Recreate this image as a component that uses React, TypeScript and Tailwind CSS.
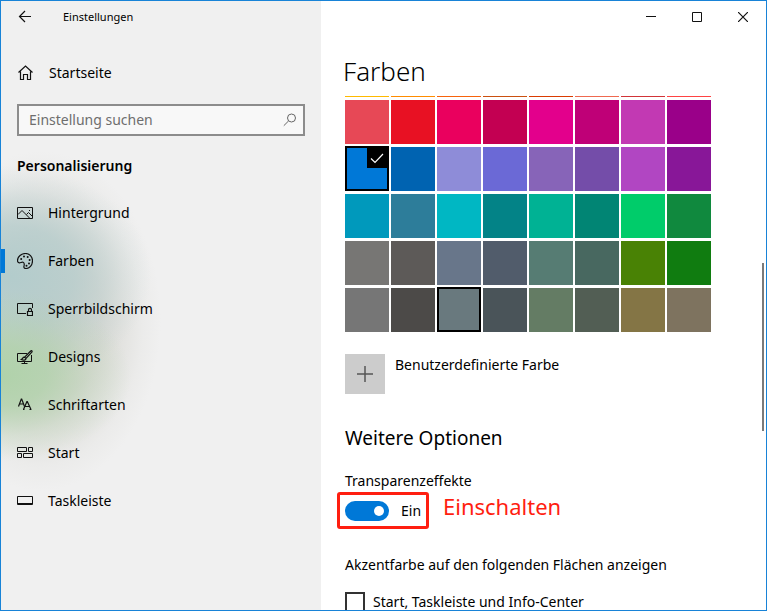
import type { ReactNode } from 'react';

const swatchRows: string[][] = [
  ['bg-[#ffb900]', 'bg-[#ff8c00]', 'bg-[#f7630c]', 'bg-[#ca5010]', 'bg-[#da3b01]', 'bg-[#ef6950]', 'bg-[#d13438]', 'bg-[#ff4343]'],
  ['bg-[#e74856]', 'bg-[#e81123]', 'bg-[#ea005e]', 'bg-[#c30052]', 'bg-[#e3008c]', 'bg-[#bf0077]', 'bg-[#c239b3]', 'bg-[#9a0089]'],
  ['bg-[#0078d7]', 'bg-[#0063b1]', 'bg-[#8e8cd8]', 'bg-[#6b69d6]', 'bg-[#8764b8]', 'bg-[#744da9]', 'bg-[#b146c2]', 'bg-[#881798]'],
  ['bg-[#0099bc]', 'bg-[#2d7d9a]', 'bg-[#00b7c3]', 'bg-[#038387]', 'bg-[#00b294]', 'bg-[#018574]', 'bg-[#00cc6a]', 'bg-[#10893e]'],
  ['bg-[#777674]', 'bg-[#5d5a58]', 'bg-[#68768a]', 'bg-[#515c6b]', 'bg-[#567c73]', 'bg-[#486860]', 'bg-[#498205]', 'bg-[#107c10]'],
  ['bg-[#767676]', 'bg-[#4c4a48]', 'bg-[#69797e]', 'bg-[#4a5459]', 'bg-[#647c64]', 'bg-[#525e54]', 'bg-[#847545]', 'bg-[#7e735f]'],
];

function Icon({ children }: { children: ReactNode }) {
  return (
    <svg viewBox="0 0 16 16" className="size-4 shrink-0" fill="none" stroke="#111" strokeWidth="1" aria-hidden="true">
      {children}
    </svg>
  );
}

const navItems: { label: string; icon: ReactNode }[] = [
  {
    label: 'Hintergrund',
    icon: (
      <Icon>
        <path d="M.5 2.500h15v11H.5z" />
        <path d="M1 9.500 5 5.500l7.500 7.500M9.500 9.500l2-2 4 4" />
        <path d="M12 5.500h1" />
      </Icon>
    ),
  },
  {
    label: 'Farben',
    icon: (
      <Icon>
        <path d="M8.500.5c4 0 7 3.200 7 7.200 0 4.500-3.200 7.800-6.500 7.800-1.800 0-2.400-1-2-2.500.4-1.700.6-3.300-.9-3.800C4.800 8.800 3.500 10 2.200 9.800.9 9.600.5 8.500.5 7.500c0-4 4-7 8-7z" strokeWidth="1.200" />
        <g fill="#111" stroke="none">
          <circle cx="4.200" cy="6" r="1" />
          <circle cx="7" cy="3.500" r="1" />
          <circle cx="10.700" cy="4" r="1" />
          <circle cx="12.600" cy="7" r="1" />
          <circle cx="12" cy="10.500" r="1" />
          <circle cx="9.500" cy="12.800" r="1" />
        </g>
      </Icon>
    ),
  },
  {
    label: 'Sperrbildschirm',
    icon: (
      <Icon>
        <path d="M9 12.500H.5v-10h15V7" />
        <path d="M10.500 10.500h5v4h-5zM11.500 10.500V8.800c0-1.800 3-1.800 3 0v1.700" strokeWidth="1.200" />
      </Icon>
    ),
  },
  {
    label: 'Designs',
    icon: (
      <Icon>
        <path d="M10 4.500H.5v8h14V6M7.500 12.500v2M4.500 14.500h6" />
        <path d="M14.800 1.800c.6.500.3 1-.2 1.600L9 9.500 7.600 8.200l5.600-5.700c.6-.6 1.100-1.100 1.600-.7zM7.600 8.200C5.500 8 5.800 10 4.300 10.500 6.500 11.600 9 11.200 9 9.500" strokeWidth="1.200" />
      </Icon>
    ),
  },
  {
    label: 'Schriftarten',
    icon: (
      <Icon>
        <path d="M1.500 9.500 4.300 2h.4l2.800 7.500M2.500 7h4" strokeWidth="1.200" />
        <path d="M6.500 12.500 9.900 4.500h.4l3.700 8M8 9.500h4.500M6 12.500h1.500M12.500 12.500h2" strokeWidth="1.200" />
      </Icon>
    ),
  },
  {
    label: 'Start',
    icon: (
      <Icon>
        <path d="M.5 2.500h9v4h-9zM11.500 2.500h4v4h-4zM.5 8.500h4v4h-4zM6.500 8.500h9v4h-9z" />
      </Icon>
    ),
  },
  {
    label: 'Taskleiste',
    icon: (
      <Icon>
        <path d="M.5 3.500h15v8H.5zM.5 10.500h15" />
      </Icon>
    ),
  },
];

function Sidebar() {
  return (
    <aside className="flex w-80 shrink-0 flex-col bg-[#f0f0f0] bg-[radial-gradient(ellipse_130px_85px_at_0_375px,#b0d2aa_0%,#b0d2aacc_35%,#b0d2aa44_70%,transparent),radial-gradient(ellipse_140px_110px_at_10px_275px,#b3cccc_0%,#b3ccccbb_45%,#b3cccc33_80%,transparent),radial-gradient(ellipse_120px_170px_at_40px_320px,#cdcdc6_0%,#cdcdc6aa_50%,#cdcdc622_85%,transparent)]">
      <header className="flex h-8 items-center">
        <button type="button" aria-label="Zurück" className="ml-4 flex size-4 items-center justify-center">
          <svg viewBox="0 0 16 16" className="size-4" fill="none" stroke="#111" strokeWidth="1.200" aria-hidden="true">
            <path d="M8 2 2.500 7.500 8 13M2.500 7.500H14" />
          </svg>
        </button>
        <span className="ml-[30px] text-[11px]">Einstellungen</span>
      </header>
      <a href="#start" className="mt-4 flex h-12 items-center gap-4 pl-4">
        <svg viewBox="0 0 16 16" className="size-4" fill="none" stroke="#111" strokeWidth="1.200" aria-hidden="true">
          <path d="M1.500 7.500 8.500 1l7 6.500M3.500 6.500v8h3v-5h4v5h3v-8" />
        </svg>
        <span>Startseite</span>
      </a>
      <label className="mr-4 ml-4 mt-[7px] flex h-8 items-center border-2 border-[#8c8c8c] bg-white/50 pr-1.5 pl-2.5">
        <input
          type="search"
          aria-label="Einstellung suchen"
          placeholder="Einstellung suchen"
          className="min-w-0 flex-1 bg-transparent outline-none placeholder:text-[#6e6e6e]"
        />
        <svg viewBox="0 0 14 14" className="size-3.5" fill="none" stroke="#666" aria-hidden="true">
          <circle cx="8.500" cy="5" r="4" />
          <path d="M5.500 8 .8 12.700" />
        </svg>
      </label>
      <h2 className="mt-5 ml-4 font-semibold">Personalisierung</h2>
      <nav className="mt-[13px]">
        {navItems.map((item) => (
          <a
            key={item.label}
            href={'#' + item.label}
            aria-current={item.label === 'Farben' ? 'page' : undefined}
            className="group flex h-12 items-center"
          >
            <span className="h-6 w-1 group-aria-[current=page]:bg-[#0078d7]" />
            <span className="ml-3">{item.icon}</span>
            <span className="ml-[15px]">{item.label}</span>
          </a>
        ))}
      </nav>
    </aside>
  );
}

function Swatch({ color }: { color: string }) {
  if (color === 'bg-[#0078d7]') {
    return (
      <button type="button" aria-label="Akzentfarbe" aria-pressed="true" className={'-mt-px flex h-[45px] items-start justify-end border-2 border-black ' + color}>
        <svg viewBox="0 0 20 20" className="size-5 bg-black" fill="none" stroke="#fff" strokeWidth="1.200" aria-hidden="true">
          <path d="m4 10.500 4 4 8-8.500" />
        </svg>
      </button>
    );
  }
  if (color === 'bg-[#69797e]') {
    return <button type="button" aria-label="Farbe" className={'-mt-px h-[45px] border-2 border-black ' + color} />;
  }
  return <button type="button" aria-label="Farbe" className={'h-11 ' + color} />;
}

export default function App() {
  return (
    <div className="flex h-screen overflow-hidden border border-[#1883d7] bg-white font-['Noto_Sans','Open_Sans',sans-serif] text-sm leading-5 text-black">
      <Sidebar />
      <main className="flex min-w-0 flex-1 flex-col">
        <div className="flex h-8 shrink-0 justify-end">
          <button type="button" aria-label="Minimieren" className="flex w-[46px] items-center justify-center">
            <svg viewBox="0 0 10 10" className="size-2.5" fill="none" stroke="#111" aria-hidden="true">
              <path d="M0 4.500h10" />
            </svg>
          </button>
          <button type="button" aria-label="Maximieren" className="flex w-[46px] items-center justify-center">
            <svg viewBox="0 0 10 10" className="size-2.5" fill="none" stroke="#111" aria-hidden="true">
              <path d="M.5.5h9v9h-9z" />
            </svg>
          </button>
          <button type="button" aria-label="Schließen" className="flex w-[46px] items-center justify-center">
            <svg viewBox="0 0 10 10" className="size-2.5" fill="none" stroke="#111" strokeWidth="1.200" aria-hidden="true">
              <path d="m0 0 10 10M10 0 0 10" />
            </svg>
          </button>
        </div>
        <h1 className="mt-[18px] ml-[22px] shrink-0 text-[26px] leading-10 font-light">Farben</h1>
        <div className="mt-[5px] flex min-h-0 flex-1">
          <div className="min-w-0 flex-1 overflow-hidden pl-6">
            <div className="-mt-[43px] grid w-fit auto-rows-[44px] grid-cols-[repeat(8,44px)] gap-x-0.5 gap-y-[3px]">
              {swatchRows.flat().map((color) => (
                <Swatch key={color} color={color} />
              ))}
            </div>
            <button type="button" className="mt-[22px] flex items-start gap-2.5">
              <span className="flex size-10 items-center justify-center bg-[#ccc]">
                <svg viewBox="0 0 16 16" className="size-4" fill="none" stroke="#555" strokeWidth="1.500" aria-hidden="true">
                  <path d="M8 0v16M0 8h16" />
                </svg>
              </span>
              <span className="leading-[22px]">Benutzerdefinierte Farbe</span>
            </button>
            <h2 className="mt-[30px] text-[19px] leading-7">Weitere Optionen</h2>
            <p className="mt-[19px]">Transparenzeffekte</p>
            <div className="mt-px -ml-2 flex items-center gap-3.5">
              <label className="flex h-[37px] w-[92px] items-center gap-3 rounded-[3px] border-[3px] border-[#ff1e10] pl-[5px]">
                <input
                  type="checkbox"
                  role="switch"
                  defaultChecked
                  className="flex h-5 w-11 shrink-0 appearance-none items-center justify-end rounded-full bg-[#0078d7] pr-[5px] before:size-2.5 before:rounded-full before:bg-white"
                />
                <span>Ein</span>
              </label>
              <span className="pb-2.5 text-[22px] leading-6 text-[#ff1e10]">Einschalten</span>
            </div>
            <p className="mt-[26px]">Akzentfarbe auf den folgenden Flächen anzeigen</p>
            <label className="mt-[17px] flex items-start gap-2">
              <input type="checkbox" className="size-5 shrink-0 appearance-none border-2 border-[#333] bg-white" />
              <span>Start, Taskleiste und Info-Center</span>
            </label>
          </div>
          <div className="mt-[167px] mr-0.5 h-[168px] w-0.5 bg-[#7a7a7a]" />
        </div>
      </main>
    </div>
  );
}
